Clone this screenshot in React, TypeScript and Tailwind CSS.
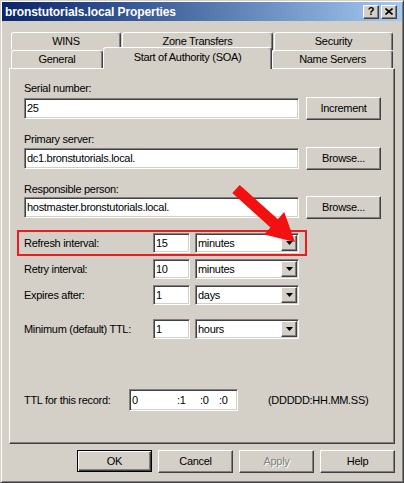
import React from "react";

const raised =
  "border border-t-white border-l-white border-r-[#404040] border-b-[#404040] shadow-[inset_-1px_-1px_0_#808080] bg-[#d4d0c8]";
const sunken =
  "border border-t-[#808080] border-l-[#808080] border-r-white border-b-white shadow-[inset_1px_1px_0_#404040,inset_-1px_-1px_0_#d4d0c8] bg-white";
const tab =
  "flex items-center justify-center border-l border-t border-r border-l-white border-t-white border-r-[#404040] shadow-[inset_-1px_0_0_#808080] rounded-t-[3px] bg-[#d4d0c8]";

function Btn({ children, className = "" }: { children: React.ReactNode; className?: string }) {
  return (
    <div className={`${raised} flex h-[23px] w-[75px] items-center justify-center ${className}`}>
      {children}
    </div>
  );
}

function Field({ value, className = "" }: { value: React.ReactNode; className?: string }) {
  return <div className={`${sunken} flex items-center pl-[2px] ${className}`}>{value}</div>;
}

function Combo({ value }: { value: string }) {
  return (
    <div className={`${sunken} ml-[5px] flex h-[20px] w-[104px] items-center p-[1px]`}>
      <span className="flex-1 pl-[1px]">{value}</span>
      <div className={`${raised} flex h-[16px] w-[16px] items-center justify-center`}>
        <svg width="7" height="4" viewBox="0 0 7 4">
          <path d="M0 0h7L3.5 4z" fill="#000" />
        </svg>
      </div>
    </div>
  );
}

function IntervalRow({ label, num, unit }: { label: string; num: string; unit: string }) {
  return (
    <div className="flex h-[20px] items-center">
      <span className="w-[129px]">{label}</span>
      <Field value={num} className="h-[20px] w-[37px]" />
      <Combo value={unit} />
    </div>
  );
}

export default function App() {
  return (
    <div className="relative h-[483px] w-[404px] overflow-hidden border border-t-[#d4d0c8] border-l-[#d4d0c8] border-r-[#404040] border-b-[#404040] bg-[#d4d0c8] p-[1px] font-['Liberation_Sans',Arial,sans-serif] text-[11px] tracking-[-0.3px] text-black shadow-[inset_1px_1px_0_#fff,inset_-1px_-1px_0_#808080]">
      {/* title bar */}
      <div className="flex h-[19px] items-center justify-between bg-linear-to-r from-[#0a246a] to-[#a6caf0] pl-[3px] pr-[5px]">
        <span className="text-[12px] font-bold tracking-[-0.1px] text-white">bronstutorials.local Properties</span>
        <div className="flex gap-[2px]">
          <div className={`${raised} flex h-[14px] w-[16px] items-center justify-center text-[11px] font-bold leading-none`}>
            ?
          </div>
          <div className={`${raised} flex h-[14px] w-[16px] items-center justify-center`}>
            <svg width="8" height="7" viewBox="0 0 8 7">
              <path d="M0.5 0.5L7.5 6.5M7.5 0.5L0.5 6.5" stroke="#000" strokeWidth="1.6" />
            </svg>
          </div>
        </div>
      </div>

      <div className="px-[7px]">
        {/* tabs */}
        <div className="mt-[11px] flex flex-col">
          <div className="flex h-[18px] gap-[1px] pl-[2px]">
            <div className={`${tab} w-[110px]`}>WINS</div>
            <div className={`${tab} w-[151px]`}>Zone Transfers</div>
            <div className={`${tab} w-[119px]`}>Security</div>
          </div>
          <div className="flex h-[18px] items-end pl-[2px]">
            <div className={`${tab} h-[18px] w-[92px]`}>General</div>
            <div className={`${tab} relative z-10 -mb-[1px] h-[22px] w-[169px] pb-[2px]`}>
              Start of Authority (SOA)
            </div>
            <div className={`${tab} h-[18px] w-[121px]`}>Name Servers</div>
          </div>
        </div>

        {/* panel */}
        <div className="flex h-[376px] flex-col border border-t-white border-l-white border-r-[#404040] border-b-[#404040] pl-[14px] pt-[13px] shadow-[inset_-1px_-1px_0_#808080]">
          <div className="leading-[13px]">Serial number:</div>
          <div className="mt-[2px] flex h-[23px] items-center">
            <Field value="25" className="h-[21px] w-[275px]" />
            <Btn className="ml-[7px]">Increment</Btn>
          </div>

          <div className="mt-[13px] leading-[13px]">Primary server:</div>
          <div className="mt-[1px] flex h-[23px] items-center">
            <Field value="dc1.bronstutorials.local." className="h-[21px] w-[275px]" />
            <Btn className="ml-[7px]">Browse...</Btn>
          </div>

          <div className="mt-[13px] leading-[13px]">Responsible person:</div>
          <div className="flex h-[23px] items-center">
            <Field value="hostmaster.bronstutorials.local." className="h-[21px] w-[275px]" />
            <Btn className="ml-[7px]">Browse...</Btn>
          </div>

          <div className="-ml-[7px] mt-[11px] w-[290px] border-2 border-[#ee1c1c] py-[1px] pl-[5px]">
            <IntervalRow label="Refresh interval:" num="15" unit="minutes" />
          </div>
          <div className="mt-[3px]">
            <IntervalRow label="Retry interval:" num="10" unit="minutes" />
          </div>
          <div className="mt-[6px]">
            <IntervalRow label="Expires after:" num="1" unit="days" />
          </div>
          <div className="mt-[14px]">
            <IntervalRow label="Minimum (default) TTL:" num="1" unit="hours" />
          </div>

          <div className="mt-[50px] flex h-[22px] items-center">
            <span className="w-[105px]">TTL for this record:</span>
            <Field
              className="h-[22px] w-[109px]"
              value={
                <>
                  <span className="w-[45px]">0</span>
                  <span className="w-[23px]">:1</span>
                  <span className="w-[19px]">:0</span>
                  <span>:0</span>
                </>
              }
            />
            <span className="ml-[30px]">(DDDDD:HH.MM.SS)</span>
          </div>
        </div>

        {/* dialog buttons */}
        <div className="mt-[6px] flex justify-end gap-[6px]">
          <div className="flex h-[22px] w-[75px] items-center justify-center border border-black bg-[#d4d0c8] shadow-[inset_1px_1px_0_#fff,inset_-1px_-1px_0_#404040,inset_-2px_-2px_0_#808080]">
            OK
          </div>
          <Btn className="h-[22px]">Cancel</Btn>
          <Btn className="h-[22px] text-[#808080] [text-shadow:1px_1px_0_#fff]">Apply</Btn>
          <Btn className="h-[22px]">Help</Btn>
        </div>
      </div>

      {/* annotation arrow */}
      <svg className="pointer-events-none absolute left-0 top-0" width="404" height="483" viewBox="0 0 404 483">
        <polygon
          points="238.7,183.9 276.9,218.2 283.2,211.1 294,241 263.2,233.5 269.5,226.4 231.3,192.1"
          fill="#f21010"
        />
      </svg>
    </div>
  );
}
